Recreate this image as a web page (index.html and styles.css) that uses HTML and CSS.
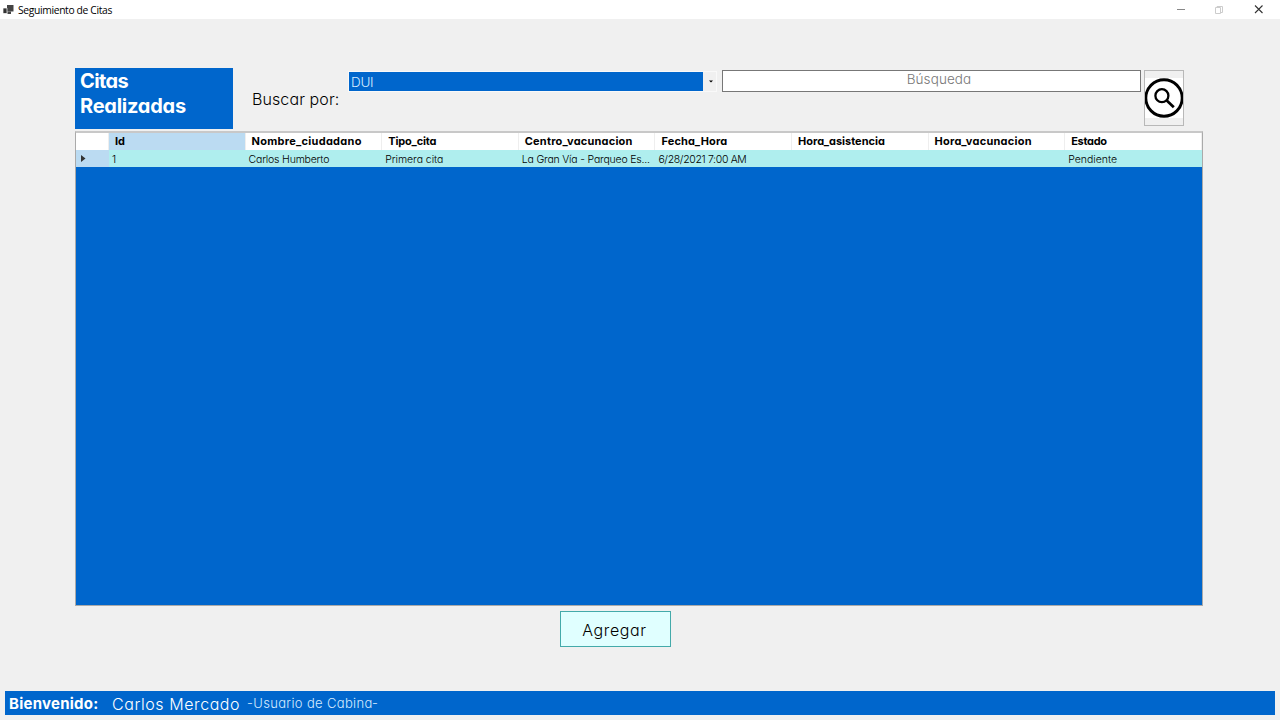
FILE: index.html
```html
<!DOCTYPE html>
<html lang="es">
<head>
<meta charset="utf-8">
<title>Seguimiento de Citas</title>
<link rel="stylesheet" href="styles.css">
</head>
<body>
<div class="window">
  <header class="titlebar">
    <svg class="app-icon" width="11" height="10" viewBox="0 0 11 10"><path fill="#444" d="M4 0h6.500v6.500H4z"/><path fill="#333" stroke="#fff" stroke-width=".7" d="M0 3h4v5.500H0z"/><path fill="#444" d="M4.500 6.500h3.500v2.500H4.500z"/></svg>
    <span class="caption">Seguimiento de Citas</span>
    <svg class="controls" width="90" height="12" viewBox="0 0 90 12" fill="none"><path stroke="#888" d="M2 5.500h8"/><path stroke="#ccc" d="M40.500 3.500h5v6h-5zM42 3.500V2.500h5.500v6H46"/><path stroke="#333" stroke-width="1.100" d="M80 1.500l7.500 7.500M87.500 1.500L80 9"/></svg>
  </header>
  <main class="content">
    <section class="toolbar">
      <h1 class="heading"><span class="h-one">Citas</span><br><span class="h-two">Realizadas</span></h1>
      <label class="search-label">Buscar por:</label>
      <div class="combo"><div class="combo-value"><span>DUI</span></div><div class="combo-arrow"><svg width="4" height="3" viewBox="0 0 4 3"><path d="M0 .5h4L2 2.500z"/></svg></div></div>
      <div class="search-box"><span>Búsqueda</span></div>
      <button class="search-button"><svg width="38" height="40" viewBox="0 0 38 40" fill="none" stroke="#000"><path fill="#fff" stroke="none" d="M0 0h38v40H0z"/><circle cx="19" cy="20" r="18.200" stroke-width="2.900"/><circle cx="16.900" cy="17.700" r="6.500" stroke-width="2.300"/><path stroke-width="2.700" d="M21.500 22.300l7.300 7"/></svg></button>
    </section>
    <section class="grid">
      <div class="row head"><div class="corner"></div><div class="selected"><span>Id</span></div><div><span class="name">Nombre_ciudadano</span></div><div><span class="type">Tipo_cita</span></div><div><span class="center">Centro_vacunacion</span></div><div><span class="date">Fecha_Hora</span></div><div><span>Hora_asistencia</span></div><div><span class="vaccination">Hora_vacunacion</span></div><div><span class="state">Estado</span></div></div>
      <div class="row data"><div class="marker"><svg width="5" height="7" viewBox="0 0 5 7"><path fill="#333" d="M0 0l4.500 3.500L0 7z"/></svg></div><div><span>1</span></div><div><span class="name">Carlos Humberto</span></div><div><span class="type">Primera cita</span></div><div><span class="center">La Gran Vía - Parqueo Es...</span></div><div><span class="date">6/28/2021 7:00 AM</span></div><div></div><div></div><div><span>Pendiente</span></div></div>
    </section>
    <button class="add">Agregar</button>
  </main>
  <footer class="status"><strong>Bienvenido:</strong><span class="user">Carlos Mercado</span><span class="role">-Usuario de Cabina-</span></footer>
</div>
</body>
</html>
```
FILE: styles.css
```css
* { box-sizing: border-box; }
body { margin: 0; background: #f0f0f0; font-family: "Century Gothic", Inter, sans-serif; font-feature-settings: "cv11"; color: #000; }
span, strong { white-space: nowrap; }
svg { display: block; }
.window { width: 1280px; height: 720px; display: flex; flex-direction: column; overflow: hidden; }
.titlebar { height: 19px; background: #fff; display: flex; align-items: center; padding: 0 15px 0 3px; }
.caption { font: 10.3px/18px "Open Sans", sans-serif; letter-spacing: -.34px; margin-left: 4px; flex: 1; }
.content { flex: 1; padding: 49px 77px 0 75px; }
.toolbar { display: flex; height: 61px; align-items: flex-start; }
.heading { margin: 0; width: 158px; height: 61px; background: #0066cc; color: #fff; font-size: 20px; line-height: 25px; padding: 1px 5px; font-weight: 700; }
.h-one { letter-spacing: -.6px; }
.h-two { letter-spacing: -.25px; }
.search-label { width: 96px; margin: 21px 0 0 19px; font-size: 16px; line-height: 20px; font-weight: 300; letter-spacing: .1px; white-space: nowrap; }
.combo { display: flex; width: 369px; height: 21px; margin: 3px 0 0; border: 1px solid #f9f9f9; }
.combo-value { width: 354px; background: #0066cc; color: #d5eaff; font-size: 13.500px; line-height: 21px; padding-left: 2px; font-weight: 300; letter-spacing: -.3px; }
.combo-arrow { flex: 1; display: flex; align-items: center; justify-content: center; padding-left: 2px; }
.search-box { width: 419px; height: 22px; margin: 2px 0 0 5px; border: 1px solid #777; background: #fff; color: #777; font-size: 13.500px; font-weight: 300; letter-spacing: .1px; line-height: 17px; text-align: center; padding-left: 15px; }
.search-button { width: 40px; height: 56px; margin: 2px 0 0 3px; padding: 0; border: 1px solid #b8b8b8; background: #f0f0f0; display: flex; align-items: center; justify-content: center; }
.grid { width: 1128px; height: 475px; margin-top: 2px; border: 1px solid #aaa; border-top: 2px solid #c8c8c8; background: #0066cc; }
.row { display: grid; grid-template-columns: 33px repeat(8, 136.600px); }
.head { height: 17px; background: #fff; font-size: 11px; font-weight: 700; line-height: 17px; }
.head > div { border-right: 1px solid #eee; padding-left: 6px; }
.head .selected { background: #bbdbf2; }
.head .name { letter-spacing: .27px; }
.head .type { letter-spacing: -.15px; }
.head .center { letter-spacing: .2px; }
.head .date { letter-spacing: .18px; }
.head .vaccination { letter-spacing: .24px; }
.head .state { letter-spacing: -.3px; }
.data { height: 17px; background: #afeeee; font-size: 10.500px; font-weight: 300; line-height: 19px; }
.data > div { height: 17px; padding-left: 3px; }
.data .marker { background: #bbdbf2; padding: 5px 0 0 5px; }
.data .name { letter-spacing: -.2px; }
.data .type { letter-spacing: -.05px; }
.data .center { letter-spacing: -.2px; }
.data .date { letter-spacing: -.34px; }
.add { display: block; width: 111px; height: 36px; margin: 5px 0 0 485px; padding: 0; border: 1px solid #4aa; background: #e0ffff; font: 300 16px/36px "Century Gothic", Inter, sans-serif; font-feature-settings: "cv11"; letter-spacing: .6px; color: #000; padding-right: 2px; }
.status { height: 24px; margin: 0 5px 5px; background: #0066cc; color: #fff; display: flex; line-height: 25px; padding-left: 4px; }
.status strong { font-size: 15px; width: 103px; letter-spacing: .25px; }
.user { font-size: 16px; font-weight: 300; width: 135px; line-height: 26px; letter-spacing: .58px; }
.role { font-size: 13px; font-weight: 300; color: #d5eaff; letter-spacing: .34px; }
```
